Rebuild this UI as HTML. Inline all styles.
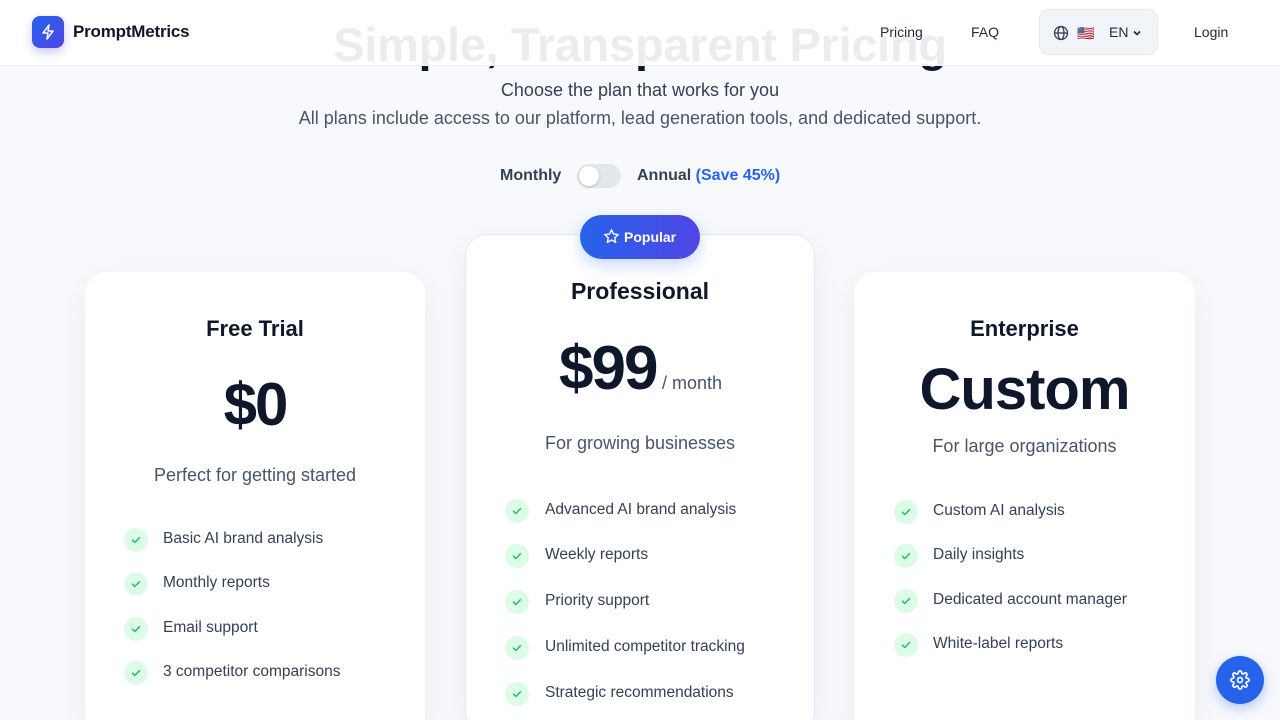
<!DOCTYPE html>
<html><head><meta charset="utf-8"><style>
*{margin:0;padding:0;box-sizing:border-box}
html{width:1280px;height:720px;overflow:hidden}
body{width:1280px;height:720px;overflow:hidden;background:#f7f9fc;font-family:"Liberation Sans",sans-serif;color:#0f172a;position:relative}
.abs{position:absolute}
.c{text-align:center}
.title{left:0;width:1280px;top:17px;font-size:47px;font-weight:700;color:#0f172a;letter-spacing:-0.3px}
header{position:absolute;left:0;top:0;width:1280px;height:66px;background:rgba(255,255,255,0.92);border-bottom:1px solid #eef1f5}
.nav{font-size:14px;color:#1e293b;top:24px}
.card{position:absolute;background:#fff;border-radius:22px;box-shadow:0 8px 30px rgba(15,23,42,0.06)}
.card h3{position:absolute;width:100%;text-align:center;font-size:22px;font-weight:700}
.feat{position:absolute;font-size:15.5px;color:#334155}
.chk{position:absolute;width:24px;height:24px;border-radius:50%;background:#dcfce7}
.chk svg{position:absolute;left:6px;top:6px}
</style></head><body>
<div class="abs c title">Simple, Transparent Pricing</div>
<header>
<div class="abs" style="left:32px;top:16px;width:32px;height:32px;border-radius:8px;background:linear-gradient(135deg,#2563eb,#4f46e5);box-shadow:0 4px 10px rgba(79,70,229,0.3)">
<svg width="32" height="32" viewBox="0 0 32 32"><path d="M17 9l-6 8h5l-1 6 6-8h-5z" fill="none" stroke="#fff" stroke-width="1.5" stroke-linejoin="round"/></svg></div>
<div class="abs" style="left:73px;top:22px;font-size:17px;font-weight:700;color:#0f172a;letter-spacing:-0.2px">PromptMetrics</div>
<div class="abs nav" style="left:880px">Pricing</div>
<div class="abs nav" style="left:971px">FAQ</div>
<div class="abs" style="left:1039px;top:9px;width:119px;height:46px;border-radius:10px;background:#f1f5f9;border:1px solid #e2e8f0">
<svg class="abs" style="left:13px;top:15px" width="16" height="16" viewBox="0 0 16 16" fill="none" stroke="#334155" stroke-width="1.3"><circle cx="8" cy="8" r="6.5"/><ellipse cx="8" cy="8" rx="3" ry="6.5"/><path d="M1.5 8h13"/></svg>
<div class="abs" style="left:37px;top:15px;font-size:14px">🇺🇸</div>
<div class="abs" style="left:69px;top:14px;font-size:14px;color:#1e293b">EN</div>
<svg class="abs" style="left:92px;top:18px" width="10" height="10" viewBox="0 0 10 10"><path d="M2 3.5l3 3 3-3" fill="none" stroke="#1e293b" stroke-width="1.6"/></svg>
</div>
<div class="abs nav" style="left:1194px">Login</div>
</header>
<div class="abs c" style="left:0;width:1280px;top:80px;font-size:18px;color:#334155">Choose the plan that works for you</div>
<div class="abs c" style="left:0;width:1280px;top:108px;font-size:18px;color:#475569">All plans include access to our platform, lead generation tools, and dedicated support.</div>
<div class="abs" style="left:500px;top:167px;font-size:16px;font-weight:700;color:#334155">Monthly</div>
<div class="abs" style="left:577px;top:164px;width:44px;height:24px;border-radius:12px;background:#e2e8f0"><div class="abs" style="left:2px;top:2px;width:20px;height:20px;border-radius:50%;background:#fff;box-shadow:0 1px 3px rgba(0,0,0,.2)"></div></div>
<div class="abs" style="left:637px;top:167px;font-size:16px;font-weight:700;color:#334155">Annual <span style="color:#2563eb">(Save 45%)</span></div>

<div class="card" style="left:85px;top:272px;width:340px;height:470px">
<h3 style="top:44px">Free Trial</h3>
<div class="abs c" style="width:100%;top:98px;font-size:60px;font-weight:700;letter-spacing:-2px">$0</div>
<div class="abs c" style="width:100%;top:193px;font-size:18px;color:#475569">Perfect for getting started</div>
</div>
<div class="card" style="left:465px;top:234px;width:350px;height:500px;border:1px solid #dbeafe">
<h3 style="top:43px;font-size:23px">Professional</h3>
<div class="abs" style="left:93px;top:98px;font-size:62px;font-weight:700;letter-spacing:-2px">$99</div>
<div class="abs" style="left:196px;top:138px;font-size:18px;color:#475569">/ month</div>
<div class="abs c" style="width:100%;top:198px;font-size:18px;color:#475569">For growing businesses</div>
</div>
<div class="abs" style="left:580px;top:215px;width:120px;height:44px;border-radius:22px;background:linear-gradient(90deg,#2563eb,#4f46e5);box-shadow:0 6px 16px rgba(37,99,235,0.25);color:#fff;font-size:14px;font-weight:700">
<svg class="abs" style="left:23px;top:13px" width="17" height="17" viewBox="0 0 24 24" fill="none" stroke="#fff" stroke-width="2" stroke-linejoin="round"><path d="M12 2.5l2.9 6 6.6.8-4.9 4.5 1.3 6.5L12 17l-5.9 3.3 1.3-6.5-4.9-4.5 6.6-.8z"/></svg>
<div class="abs" style="left:44px;top:14px">Popular</div></div>
<div class="card" style="left:854px;top:272px;width:341px;height:470px">
<h3 style="top:44px">Enterprise</h3>
<div class="abs c" style="width:100%;top:84px;font-size:58px;font-weight:700;letter-spacing:-1px">Custom</div>
<div class="abs c" style="width:100%;top:164px;font-size:18px;color:#475569">For large organizations</div>
</div>

<div id="f"></div>
<script>
const sets=[[124,163,[540,584,629,673],["Basic AI brand analysis","Monthly reports","Email support","3 competitor comparisons"]],
[505,545,[511,556,602,648,694],["Advanced AI brand analysis","Weekly reports","Priority support","Unlimited competitor tracking","Strategic recommendations"]],
[894,933,[512,556,601,645],["Custom AI analysis","Daily insights","Dedicated account manager","White-label reports"]]];
let h="";
for(const [cx,tx,ys,ts] of sets){ys.forEach((y,i)=>{h+=`<div class="chk" style="left:${cx}px;top:${y-12}px"><svg width="12" height="12" viewBox="0 0 12 12"><path d="M2.5 6.2l2.3 2.3 4.7-4.8" fill="none" stroke="#22c55e" stroke-width="1.5" stroke-linecap="round" stroke-linejoin="round"/></svg></div><div class="feat" style="left:${tx}px;top:${y-10}px">${ts[i]}</div>`;});}
document.getElementById("f").innerHTML=h;
</script>
<div class="abs" style="left:1216px;top:656px;width:48px;height:48px;border-radius:50%;background:#2563eb;box-shadow:0 4px 12px rgba(37,99,235,.35)">
<svg class="abs" style="left:14px;top:14px" width="20" height="20" viewBox="0 0 24 24" fill="none" stroke="#fff" stroke-width="2"><circle cx="12" cy="12" r="3"/><path d="M19.4 15a1.7 1.7 0 0 0 .3 1.8l.1.1a2 2 0 1 1-2.8 2.8l-.1-.1a1.7 1.7 0 0 0-1.8-.3 1.7 1.7 0 0 0-1 1.5V21a2 2 0 1 1-4 0v-.1a1.7 1.7 0 0 0-1.1-1.5 1.7 1.7 0 0 0-1.8.3l-.1.1a2 2 0 1 1-2.8-2.8l.1-.1a1.7 1.7 0 0 0 .3-1.8 1.7 1.7 0 0 0-1.5-1H3a2 2 0 1 1 0-4h.1a1.7 1.7 0 0 0 1.5-1.1 1.7 1.7 0 0 0-.3-1.8l-.1-.1a2 2 0 1 1 2.8-2.8l.1.1a1.7 1.7 0 0 0 1.8.3H9a1.7 1.7 0 0 0 1-1.5V3a2 2 0 1 1 4 0v.1a1.7 1.7 0 0 0 1 1.5 1.7 1.7 0 0 0 1.8-.3l.1-.1a2 2 0 1 1 2.8 2.8l-.1.1a1.7 1.7 0 0 0-.3 1.8V9a1.7 1.7 0 0 0 1.5 1H21a2 2 0 1 1 0 4h-.1a1.7 1.7 0 0 0-1.5 1z"/></svg></div>
</body></html>
